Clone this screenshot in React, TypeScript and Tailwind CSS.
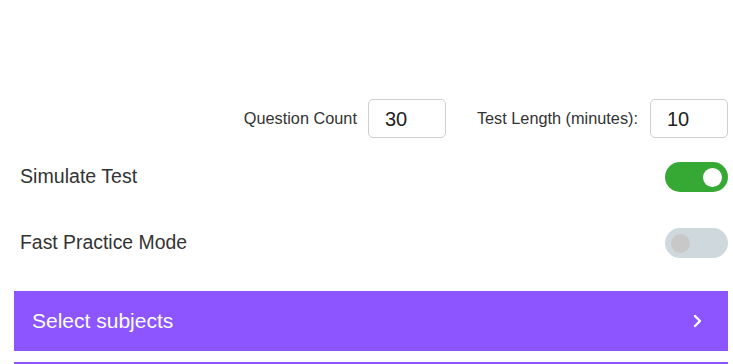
import React from "react";

function Toggle({ on }: { on: boolean }) {
  return (
    <div
      className={
        "flex h-[30px] w-[63px] items-center rounded-full px-[6px] " +
        (on ? "justify-end bg-[#36a934]" : "justify-start bg-[#cfd8dc]")
      }
    >
      <div
        className={
          "h-[19px] w-[19px] rounded-full " + (on ? "bg-white" : "bg-[#c8c8c8]")
        }
      />
    </div>
  );
}

export default function App() {
  return (
    <div
      className="h-[364px] w-[733px] overflow-hidden bg-white text-[#333333]"
      style={{ fontFamily: '"Liberation Sans", Arial, sans-serif' }}
    >
      <div className="flex flex-col pl-[14px] pr-[5px]">
        <div className="mt-[99px] flex h-[39px] items-center justify-end">
          <span className="text-[16.3px]">Question Count</span>
          <div className="ml-[11px] flex h-[39px] w-[78px] items-center rounded-[5px] border border-[#cfcfcf] pl-[16px] text-[20px] text-[#222]">
            30
          </div>
          <span className="ml-[31px] text-[16.3px]">Test Length (minutes):</span>
          <div className="ml-[12px] flex h-[39px] w-[78px] items-center rounded-[5px] border border-[#cfcfcf] pl-[16px] text-[20px] text-[#222]">
            10
          </div>
        </div>

        <div className="mt-[24px] flex h-[30px] items-center justify-between pl-[6px]">
          <span className="text-[19.6px]">Simulate Test</span>
          <Toggle on={true} />
        </div>

        <div className="mt-[36px] flex h-[30px] items-center justify-between pl-[6px]">
          <span className="text-[19.4px]">Fast Practice Mode</span>
          <Toggle on={false} />
        </div>

        <div className="mt-[33px] flex h-[60px] items-center justify-between bg-[#8c55ff] pl-[18px] pr-[26px] text-white">
          <span className="text-[21px]">Select subjects</span>
          <svg width="10" height="14" viewBox="0 0 10 14" fill="none">
            <path d="M3 2 L8 7 L3 12" stroke="white" strokeWidth="2.4" strokeLinecap="round" strokeLinejoin="round" />
          </svg>
        </div>

        <div className="mt-[11px] h-[60px] bg-[#8c55ff]" />
      </div>
    </div>
  );
}
